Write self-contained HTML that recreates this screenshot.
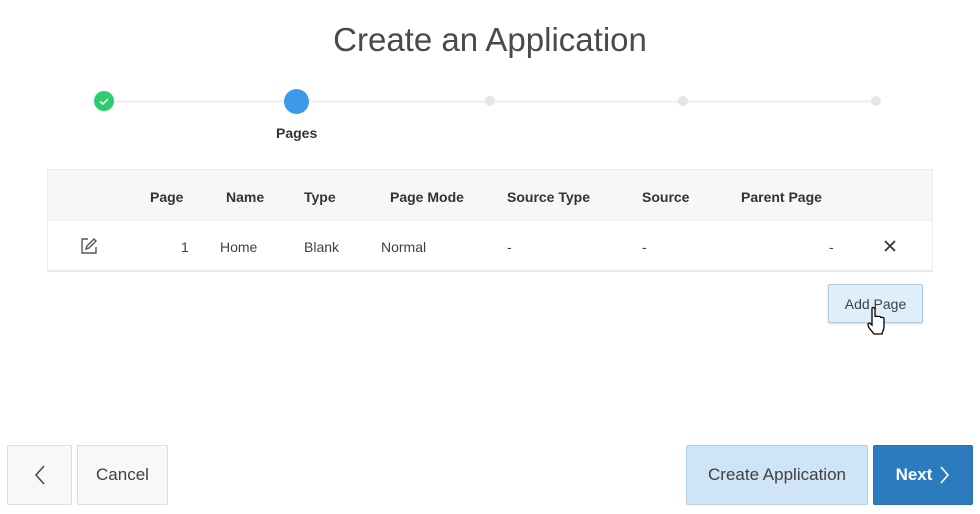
<!DOCTYPE html>
<html><head><meta charset="utf-8"><style>
*{box-sizing:border-box;margin:0;padding:0}
body{width:980px;height:514px;background:#fff;font-family:"Liberation Sans",sans-serif;color:#404040;position:relative;overflow:hidden}
.a{position:absolute}
h1{position:absolute;left:0;width:980px;top:21px;text-align:center;font-weight:normal;font-size:33px;color:#4a4a4a}
.line{top:100px;left:104px;width:772px;height:3px;background:#f3f3f3}
.dot{border-radius:50%;background:#e5e5e5;width:10px;height:10px;top:96px}
.hdr{left:47px;top:169px;width:886px;height:52px;background:#f7f7f7;border:1px solid #ececec}
.row{left:47px;top:220px;width:886px;height:52px;background:#fff;border:1px solid #ececec;border-top:1px solid #eee;border-bottom:2px solid #eaeaea}
.t{position:absolute;font-size:14px;white-space:nowrap}
.b{font-weight:bold;color:#333;top:189px}
.r{top:239px;color:#404040}
.btn{position:absolute;border:1px solid #dcdcdc;background:#f8f8f8;border-radius:2px;font-size:17px;display:flex;align-items:center;justify-content:center}
</style></head><body>
<h1>Create an Application</h1>
<div class="a line"></div>
<div class="a" style="left:94px;top:91px;width:20px;height:20px;border-radius:50%;background:#2ecc71"><svg width="20" height="20"><path d="M6 10.5l3 2.5 5-5" stroke="#fff" stroke-width="1.5" fill="none"/></svg></div>
<div class="a" style="left:284px;top:89px;width:25px;height:25px;border-radius:50%;background:#3b9ae9"></div>
<div class="a dot" style="left:485px"></div>
<div class="a dot" style="left:678px"></div>
<div class="a dot" style="left:871px"></div>
<div class="t" style="left:276px;top:125px;font-weight:bold;color:#333">Pages</div>
<div class="a hdr"></div>
<div class="a row"></div>
<div class="t b" style="left:150px">Page</div>
<div class="t b" style="left:226px">Name</div>
<div class="t b" style="left:304px">Type</div>
<div class="t b" style="left:390px">Page Mode</div>
<div class="t b" style="left:507px">Source Type</div>
<div class="t b" style="left:642px">Source</div>
<div class="t b" style="left:741px">Parent Page</div>
<svg class="a" style="left:79px;top:236px" width="20" height="20"><path d="M9 3H3v14h14v-6" stroke="#555" stroke-width="1.4" fill="none"/><path d="M7 13l1-3 7-7 2 2-7 7z" stroke="#555" stroke-width="1.4" fill="none"/></svg>
<div class="t r" style="left:181px">1</div>
<div class="t r" style="left:220px">Home</div>
<div class="t r" style="left:304px">Blank</div>
<div class="t r" style="left:381px">Normal</div>
<div class="t r" style="left:507px">-</div>
<div class="t r" style="left:642px">-</div>
<div class="t r" style="left:829px">-</div>
<svg class="a" style="left:884px;top:240px" width="12" height="12"><path d="M1 1l10 10M11 1L1 11" stroke="#333" stroke-width="1.8"/></svg>
<div class="btn" style="left:828px;top:284px;width:95px;height:39px;background:#dfeefb;border-color:#b5c8d8;font-size:14px;color:#404040;box-shadow:0 1px 2px rgba(0,0,0,.15)">Add Page</div>
<svg class="a" style="left:866px;top:306px" width="22" height="32"><path d="M6 2c1-1 3 0 3 1v8c0-1 3-1 3 0 0-1 3-1 3 1 0-1 3-1 3 1v8c0 3-2 5-2 7H8c-1-2-6-6-6-9s2-2 4 0V3z" fill="#fff" stroke="#000" stroke-width="1.3"/></svg>
<div class="btn" style="left:7px;top:445px;width:65px;height:60px"><svg width="14" height="22"><path d="M11 2L3 11l8 9" stroke="#444" stroke-width="1.5" fill="none"/></svg></div>
<div class="btn" style="left:77px;top:445px;width:91px;height:60px;color:#404040">Cancel</div>
<div class="btn" style="left:686px;top:445px;width:182px;height:60px;background:#cfe4f7;border-color:#b7cfe5;color:#404040">Create Application</div>
<div class="btn" style="left:873px;top:445px;width:100px;height:60px;background:#2d7bbf;border-color:#2a72b2;color:#fff;font-weight:bold">Next <svg style="margin-left:6px" width="12" height="22"><path d="M3 3l7 8-7 8" stroke="#fff" stroke-width="1.6" fill="none"/></svg></div>
</body></html>
